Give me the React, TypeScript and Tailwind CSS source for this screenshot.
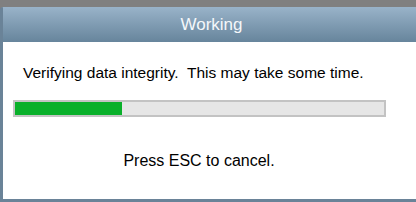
export default function App() {
  return (
    <div className="flex h-[202px] w-[416px] flex-col overflow-hidden bg-[#808080] font-['Liberation_Sans',Arial,sans-serif]">
      <div className="h-[7px] shrink-0" />
      <div className="flex flex-1 flex-col overflow-hidden rounded-tl-[3px] border-b-[3px] border-l-[3px] border-[#6a8398] bg-white">
        <div className="-ml-[3px] flex h-[35px] shrink-0 items-center justify-center rounded-tl-[3px] bg-gradient-to-b from-[#99b3c9] to-[#67859c] pl-[7px] pt-[1px] text-[17px] text-[#f4f7fa]">
          Working
        </div>
        <div className="flex flex-1 flex-col">
          <div className="whitespace-pre pl-[20px] pt-[22px] text-[15.5px] leading-[18px] text-black">
            Verifying data integrity.  This may take some time.
          </div>
          <div className="ml-[10px] mt-[18px] h-[17px] w-[373px] border-2 border-[#c3c3c3] bg-[#e6e6e6]">
            <div className="h-full w-[107px] bg-[#09b02a]" />
          </div>
          <div className="mt-[35px] w-[392px] text-center text-[16px] leading-[18px] text-black">
            Press ESC to cancel.
          </div>
        </div>
      </div>
    </div>
  );
}
